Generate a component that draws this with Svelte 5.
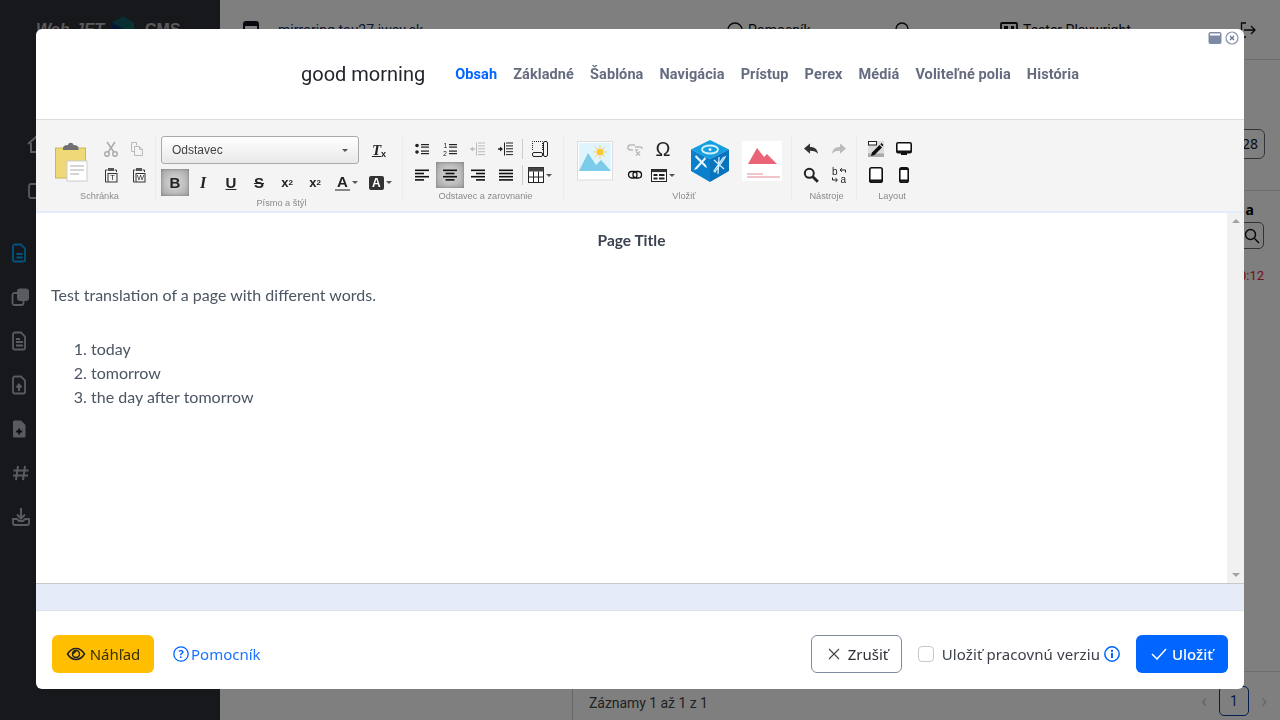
<script>
  const tabs = ['Obsah', 'Základné', 'Šablóna', 'Navigácia', 'Prístup', 'Perex', 'Médiá', 'Voliteľné polia', 'História'];

  // toolbar glyphs, all on a 16x16 box
  const lines = (rows, h = 1.6) => rows.map(([x, y, w]) => `<rect x="${x}" y="${y}" width="${w}" height="${h}"/>`).join('');
  const icons = {
    cut: '<g fill="none" stroke="#aaa" stroke-width="1.5"><circle cx="4" cy="13" r="2.2"/><circle cx="12" cy="13" r="2.2"/><path d="M5.2 11 12 1M10.8 11 4 1"/></g>',
    copy: '<g fill="none" stroke="#bbb" transform="translate(-2 0)"><path d="M2.5 1.5h5v3M2.500 1.500v9h3"/><path d="M5.500 5.500h5l3 3v6h-8z"/><path d="M10.500 5.500v3h3"/></g>',
    pasteT: '<g fill="none" stroke="#333"><path d="M4.500 3h-2v12h2M11.500 3h2v2"/><rect x="5" y="6.500" width="9" height="8.500"/></g><rect x="5" y="1" width="6" height="3" fill="#555"/><text x="9.500" y="13.400" font-size="7.500" text-anchor="middle" fill="#222" font-family="Liberation Sans">T</text>',
    pasteW: '<g fill="none" stroke="#333"><path d="M4.500 3h-2v12h2M11.500 3h2v2"/><rect x="5" y="6.500" width="9" height="8.500"/></g><rect x="5" y="1" width="6" height="3" fill="#555"/><text x="9.500" y="13.400" font-size="7.500" text-anchor="middle" fill="#222" font-family="Liberation Sans">W</text>',
    bullets: '<g fill="#222"><circle cx="3" cy="4.500" r="1.800"/><circle cx="3" cy="11" r="1.800"/>' + lines([[7, 3, 8], [7, 5.500, 8], [7, 9.500, 8], [7, 12, 8]], 1.2) + '</g>',
    numbers: '<g fill="#222"><text x="1.500" y="7" font-size="7" font-family="Liberation Sans">1</text><text x="1" y="14.500" font-size="7" font-family="Liberation Sans">2</text>' + lines([[7, 3, 8], [7, 5.500, 8], [7, 9.500, 8], [7, 12, 8]], 1.2) + '</g>',
    outdent: '<g fill="#bbb">' + lines([[8, 1.500, 7], [8, 4.400, 7], [8, 7.300, 7], [8, 10.200, 7], [8, 13.100, 7]], 1) + '<rect x="6" y="1.500" width="1" height="13"/><path d="M0 8l3-2.500v1.800h2v1.400H3v1.800z"/></g>',
    indent: '<g fill="#222">' + lines([[8, 1.500, 7], [8, 4.400, 7], [8, 7.300, 7], [8, 10.200, 7], [8, 13.100, 7]], 1) + '<rect x="6" y="1.500" width="1" height="13"/><path d="M5 8 2 5.500v1.800H0v1.400h2v1.800z"/></g>',
    blocks: '<g fill="none" stroke="#222"><path d="M.5 9V.5h10V9" stroke-dasharray="1 1"/><rect x="11.500" y=".5" width="4" height="15" rx="1.500"/><rect x=".5" y="11.500" width="10" height="4" rx="1.500"/></g>',
    left: '<g fill="#111">' + lines([[1, 2.500, 14], [1, 5.700, 9], [1, 8.900, 14], [1, 12.100, 9]]) + '</g>',
    center: '<g fill="#111">' + lines([[1, 2.500, 14], [3.500, 5.700, 9], [1, 8.900, 14], [3.500, 12.100, 9]]) + '</g>',
    right: '<g fill="#111">' + lines([[1, 2.500, 14], [6, 5.700, 9], [1, 8.900, 14], [6, 12.100, 9]]) + '</g>',
    justify: '<g fill="#111">' + lines([[1, 2.500, 14], [1, 5.700, 14], [1, 8.900, 14], [1, 12.100, 14]]) + '</g>',
    table: '<rect x=".5" y=".5" width="15" height="15" fill="#fff" stroke="#222"/><rect x=".5" y=".5" width="15" height="4" fill="#444"/><path d="M.5 10h15M5.500 4.500v11M10.500 4.500v11" stroke="#222" fill="none"/>',
    unlink: '<g fill="none" stroke="#bbb" stroke-width="1.500"><path d="M8 4H3.500a2.500 2.500 0 0 0 0 5H6M8 9h3"/><path d="M8 6h5a2 2 0 0 1 2 2"/><path d="m9 10.500 4 4m0-4-4 4"/></g>',
    link: '<g fill="none" stroke="#111" stroke-width="1.300"><rect x="1.500" y="4.500" width="8.500" height="6.500" rx="3.200"/><rect x="6" y="4.500" width="8.500" height="6.500" rx="3.200"/></g>',
    form: '<rect x=".5" y="2.500" width="15" height="12" fill="#fff" stroke="#222"/><rect x=".5" y="2.500" width="15" height="2.600" fill="#333"/><g fill="#222"><rect x="2.500" y="7" width="4" height="2"/><rect x="2.500" y="10.500" width="4" height="2"/><rect x="8" y="7" width="5.500" height="2"/><rect x="8" y="10.500" width="5.500" height="2"/></g>',
    undo: '<path d="M1 7.500 7 2.500V6c5 0 7.500 2.500 8 7-1.500-2.400-4-3.200-8-3.200v3z" fill="#333"/>',
    redo: '<path d="M15 7.500 9 2.500V6c-5 0-7.500 2.500-8 7 1.500-2.400 4-3.200 8-3.200v3z" fill="#bbb"/>',
    search: '<circle cx="6.300" cy="6.300" r="4.500" fill="none" stroke="#222" stroke-width="2"/><path d="m9.800 9.800 5 5" stroke="#222" stroke-width="2.800"/>',
    replace: '<text x="1" y="7.500" font-size="10" fill="#222" font-family="Liberation Sans">b</text><text x="9.500" y="16" font-size="10" fill="#222" font-family="Liberation Sans">a</text><path d="M14.500 5.500V3H9.500M11 1.200 9 3l2 1.800M1.500 10.500V13H6M4.500 11.200 6.500 13l-2 1.800" fill="none" stroke="#222"/>',
    edit: '<rect width="16" height="16" fill="#ddd"/><rect y="12.500" width="16" height="3.500" fill="#aaa"/><rect x=".5" y=".5" width="8" height="3.500" fill="#fff" stroke="#222"/><path d="M3 15l1-3.500L11.500 4 14 6.500 6.500 14z" fill="#111"/><path d="m12.300 3.200 1.200-1.200 2 2-1.200 1.200z" fill="#111"/>',
    desktop: '<rect x=".8" y="1.800" width="14.400" height="10" rx="1.300" fill="#fff" stroke="#111" stroke-width="1.600"/><rect x="1" y="9.500" width="14" height="2.500" fill="#111"/><rect x="5" y="12" width="6" height="2" fill="#111"/>',
    tablet: '<rect x="1.800" y=".8" width="12.400" height="14.400" rx="1.800" fill="#fff" stroke="#111" stroke-width="1.600"/><rect x="2" y="12.500" width="12" height="2.300" fill="#111"/>',
    phone: '<rect x="3.800" y=".8" width="8.400" height="14.400" rx="1.800" fill="#fff" stroke="#111" stroke-width="1.600"/><rect x="4" y="12.500" width="8" height="2.300" fill="#111"/><rect x="4" y="1" width="8" height="2" fill="#111"/>'
  };

  const sideIcons = [
    '<path d="M4 1.500h6l4 4V17a1.500 1.500 0 0 1-1.500 1.500h-9A1.500 1.500 0 0 1 2 17V3.500A2 2 0 0 1 4 1.500z" fill="none" stroke="currentColor" stroke-width="1.800"/><path d="M5.500 11h6M5.500 14.500h6" stroke="currentColor" stroke-width="1.800"/>',
    '<rect x="1.500" y="6" width="11" height="12" rx="2" fill="none" stroke="currentColor" stroke-width="1.800"/><rect x="6" y="1.500" width="12" height="12.500" rx="3" fill="currentColor"/>',
    '<path d="M4 1.500h6l4 4V17a1.500 1.500 0 0 1-1.500 1.500h-9A1.500 1.500 0 0 1 2 17V3.500A2 2 0 0 1 4 1.500z" fill="none" stroke="currentColor" stroke-width="1.800"/><path d="M5 8h4M5 11h7M5 14.500h7" stroke="currentColor" stroke-width="1.800"/>',
    '<path d="M4 1.500h6l4 4V17a1.500 1.500 0 0 1-1.500 1.500h-9A1.500 1.500 0 0 1 2 17V3.500A2 2 0 0 1 4 1.500z" fill="none" stroke="currentColor" stroke-width="1.800"/><path d="M8 16v-5M5.500 12.500 8 9.500l2.500 3" fill="none" stroke="currentColor" stroke-width="2"/>',
    '<path d="M3.500 1.500h6.500l4.500 4.500V17a1.500 1.500 0 0 1-1.500 1.500H3.500A1.500 1.500 0 0 1 2 17V3a1.500 1.500 0 0 1 1.500-1.500z" fill="currentColor"/><path d="M8.200 9.500v6M5.200 12.500h6" stroke="#17181c" stroke-width="1.800"/>',
    '<path d="M7 3 5 17M14 3l-2 14M2.500 7.500h15M2 12.500h15" stroke="currentColor" stroke-width="2" fill="none"/>',
    '<path d="M10 1v10M6 7.500l4 4 4-4" fill="none" stroke="currentColor" stroke-width="2"/><path d="M2 12v4a2 2 0 0 0 2 2h12a2 2 0 0 0 2-2v-4h-4l-2 2H8l-2-2z" fill="none" stroke="currentColor" stroke-width="1.800"/>'
  ];
</script>

{#snippet tb(name, extra = '')}
  <button type="button" class="tb {extra}" aria-label={name}>
    <svg width="16" height="16" viewBox="0 0 16 16" overflow="visible">{@html icons[name]}</svg>
  </button>
{/snippet}

<div class="page">
  <aside class="sidebar">
    <div class="logo">
      <span class="web">Web</span><span class="jet">JET</span>
      <svg width="24" height="28" viewBox="0 0 26 30"><path d="M13 0 25 7 13 14 1 7z" fill="#0f5f63"/><path d="M1 7v15l12 7V14z" fill="#0b2f6e"/><path d="M25 7v15l-12 7V14z" fill="#0c6a5e"/></svg>
      <span class="cms">CMS</span>
    </div>
    <nav class="side-nav">
      <div class="side-top">
        <svg width="20" height="20" viewBox="0 0 20 20"><path d="M1 10 10 2l9 8M4 9v9h12V9" fill="none" stroke="currentColor" stroke-width="2"/></svg>
        <svg width="20" height="20" viewBox="0 0 20 20"><rect x="2" y="3" width="16" height="14" rx="2" fill="none" stroke="currentColor" stroke-width="1.800"/></svg>
      </div>
      {#each sideIcons as ic, i}
        <svg class:active={i === 0} width="20" height="20" viewBox="0 0 20 20">{@html ic}</svg>
      {/each}
    </nav>
  </aside>

  <main class="main">
    <header class="topbar">
      <span class="domain"><svg width="16" height="18" viewBox="0 0 16 18"><rect x="1" y="1" width="14" height="16" rx="2" fill="none" stroke="#0b1020" stroke-width="2"/><rect x="1" y="1" width="14" height="4" fill="#0b1020"/></svg>
        <span>mirroring.tau27.iway.sk</span></span>
      <span class="top-help">
        <svg width="16" height="16" viewBox="0 0 16 16"><circle cx="8" cy="8" r="7" fill="none" stroke="#111" stroke-width="1.400"/></svg>
        Pomocník</span>
      <svg class="top-search" width="16" height="16" viewBox="0 0 16 16"><circle cx="7" cy="7" r="6" fill="none" stroke="#111" stroke-width="1.400"/></svg>
      <span class="top-user">
        <svg width="18" height="16" viewBox="0 0 18 16"><rect x="1" y="1" width="16" height="14" rx="1" fill="none" stroke="#111" stroke-width="1.800"/><rect x="4" y="4" width="4" height="4" fill="#111"/><rect x="11" y="4" width="3" height="4" fill="#111"/></svg>
        Tester Playwright ⌄</span>
      <svg width="16" height="18" viewBox="0 0 16 18"><path d="M6 2H1.500v14H6M4 9h11M11 5l4 4-4 4" fill="none" stroke="#111" stroke-width="1.300"/></svg>
    </header>
    <section class="behind">
      <div class="b-toolbar"><span class="b-box">28</span></div>
      <div class="b-table">
        <b class="b-head">a</b>
        <span class="b-search">
          <svg width="16" height="16" viewBox="0 0 16 16"><circle cx="6.500" cy="6.500" r="5" fill="none" stroke="#111" stroke-width="1.400"/><path d="m10.500 10.500 4.500 4.500" stroke="#111" stroke-width="1.400"/></svg>
        </span>
        <span class="b-time">0:12</span>
      </div>
    </section>
    <footer class="b-foot">
      <span class="b-count">Záznamy 1 až 1 z 1</span>
      <span class="pager"><span class="chev">‹</span><span class="page-no">1</span><span class="chev">›</span></span>
    </footer>
  </main>
</div>

<div class="backdrop"></div>

<div class="modal" role="dialog">
  <div class="win-ctl">
    <svg width="14" height="14" viewBox="0 0 14 14"><rect x=".5" y="1" width="13" height="12" rx="2" fill="#7d8aa5"/><rect x="2" y="2.500" width="10" height="2" fill="#fff"/></svg>
    <svg width="14" height="14" viewBox="0 0 14 14"><circle cx="7" cy="7" r="6" fill="#fff" stroke="#8894ac" stroke-width="1.200"/><path d="m5 5 4 4m0-4-4 4" stroke="#66728c" stroke-width="1.300"/></svg>
  </div>
  <div class="modal-head">
    <h2>good morning</h2>
    <ul class="tabs">
      {#each tabs as t, i}
        <li class:on={i === 0}>{t}</li>
      {/each}
    </ul>
  </div>

  <div class="toolbar">
    <div class="group g-clip">
      <div class="body">
        <svg class="paste" width="36" height="42" viewBox="0 0 36 42">
          <rect x=".5" y="8" width="30" height="30" fill="#efd976" stroke="#cbb560"/>
          <path d="M8 8c0-2 2-3 5-3 .5-3 5-3 5.500 0 3 0 5 1 5 3v2H8z" fill="#6f6f6f"/>
          <rect x="12" y="21" width="20" height="20" fill="#fff" stroke="#ccc"/>
          <path d="M15 26h14M15 30h14M15 34h9" stroke="#c8c8c8" stroke-width="1.500"/>
        </svg>
        <div class="rows">
          <div class="row">{@render tb('cut')}{@render tb('copy')}</div>
          <div class="row">{@render tb('pasteT')}{@render tb('pasteW')}</div>
        </div>
      </div>
      <span class="label">Schránka</span>
    </div>

    <div class="group g-font">
      <div class="body col">
        <div class="row top">
          <div class="select">Odstavec<i class="caret"></i></div>
          <button type="button" class="tb clear" aria-label="clear"><span class="tx">T</span><span class="xs">x</span></button>
        </div>
        <div class="row styles">
          <button type="button" class="tb ch on">B</button>
          <button type="button" class="tb ch ital">I</button>
          <button type="button" class="tb ch und">U</button>
          <button type="button" class="tb ch str">S</button>
          <button type="button" class="tb ch small">x<sub>2</sub></button>
          <button type="button" class="tb ch small">x<sup>2</sup></button>
          <button type="button" class="tb ch wide"><span class="fcol">A</span><i class="caret"></i></button>
          <button type="button" class="tb ch wide"><span class="bcol">A</span><i class="caret"></i></button>
        </div>
      </div>
      <span class="label">Písmo a štýl</span>
    </div>

    <div class="group g-para">
      <div class="body col">
        <div class="row">{@render tb('bullets')}{@render tb('numbers')}{@render tb('outdent')}{@render tb('indent')}<i class="vsep"></i>{@render tb('blocks')}</div>
        <div class="row">{@render tb('left')}{@render tb('center', 'on')}{@render tb('right')}{@render tb('justify')}<i class="vsep"></i>
          <button type="button" class="tb wide" aria-label="table"><svg width="16" height="16" viewBox="0 0 16 16">{@html icons.table}</svg><i class="caret"></i></button></div>
      </div>
      <span class="label">Odstavec a zarovnanie</span>
    </div>

    <div class="group g-insert">
      <div class="body">
        <svg class="pic" width="36" height="40" viewBox="0 0 36 40">
          <rect x=".5" y=".5" width="35" height="38.500" fill="#fff" stroke="#ddd"/>
          <rect x="2" y="2" width="32" height="28" fill="#dff4fc"/>
          <path d="M2 30 11 12l8 12 5-5 10 11z" fill="#7ccbea"/>
          <circle cx="23" cy="11" r="3.500" fill="#fdc72e"/>
          <path d="M23 4.500v2M23 15.500v2M16.500 11h2M27.500 11h2M18.500 6.500l1.500 1.500M26 14l1.500 1.500M27.500 6.500 26 8M20 14l-1.500 1.500" stroke="#fdc72e"/>
        </svg>
        <div class="rows">
          <div class="row">{@render tb('unlink')}<button type="button" class="tb omega">Ω</button></div>
          <div class="row">{@render tb('link')}<button type="button" class="tb wide" aria-label="form"><svg width="16" height="16" viewBox="0 0 16 16">{@html icons.form}</svg><i class="caret"></i></button></div>
        </div>
        <svg class="cube-big" width="40" height="42" viewBox="0 0 40 42">
          <path d="M20 0 39 9.500 20 19 1 9.500z" fill="#159fe0"/>
          <path d="M1 9.500V31l19 11V19z" fill="#0a7fcc"/>
          <path d="M39 9.500V31L20 42V19z" fill="#0a73bd"/>
          <ellipse cx="20" cy="9.500" rx="8" ry="4" fill="none" stroke="#d3f0fb" stroke-width="1.800"/>
          <circle cx="20" cy="9.500" r="1.500" fill="#d3f0fb"/>
          <path d="m5 17 10 10 2 1-1-3L6 15zM15 17 5 28l-1 2 3-1 9-10z" fill="#e9f7fd"/>
          <path d="m25 32 9-13 1-2-2 1-9 13zM24 20l10 9M29 17l-1 17" fill="none" stroke="#cdeefa" stroke-width="1.300"/>
        </svg>
        <svg class="pink" width="40" height="40" viewBox="0 0 40 40">
          <rect width="40" height="40" fill="#fff"/>
          <path d="M6 23 15 7l7 9 3-3 10 10z" fill="#ea6377"/>
          <path d="M5 33h16M5 36h33" stroke="#ea8a98" stroke-width="1.200"/>
        </svg>
      </div>
      <span class="label">Vložiť</span>
    </div>

    <div class="group g-tools">
      <div class="body col">
        <div class="row">{@render tb('undo')}{@render tb('redo')}</div>
        <div class="row">{@render tb('search')}{@render tb('replace')}</div>
      </div>
      <span class="label">Nástroje</span>
    </div>

    <div class="group g-layout">
      <div class="body col">
        <div class="row">{@render tb('edit')}{@render tb('desktop')}</div>
        <div class="row">{@render tb('tablet')}{@render tb('phone')}</div>
      </div>
      <span class="label">Layout</span>
    </div>
  </div>

  <div class="editor">
    <div class="content">
      <h3>Page Title</h3>
      <p>Test translation of a page with different words.</p>
      <ol>
        <li>today</li>
        <li>tomorrow</li>
        <li>the day after tomorrow</li>
      </ol>
    </div>
    <div class="scroll"><i class="up"></i><i class="down"></i></div>
  </div>
  <div class="status"></div>

  <div class="modal-foot">
    <button type="button" class="btn preview">
      <svg width="20" height="20" viewBox="0 0 20 20"><path d="M1.500 10C4 6 7 4.500 10 4.500s6 1.500 8.500 5.500c-2.500 4-5.500 5.500-8.500 5.500S4 14 1.500 10z" fill="none" stroke="#222" stroke-width="1.500"/><circle cx="10" cy="10" r="3.500" fill="none" stroke="#222" stroke-width="1.500"/><path d="M7.500 10A2.500 2.500 0 0 1 10 7.500" stroke="#222" stroke-width="1.500" fill="none"/></svg>
      Náhľad
    </button>
    <span class="help">
      <svg width="16" height="16" viewBox="0 0 16 16"><circle cx="8" cy="8" r="7.200" fill="none" stroke="#0066ff" stroke-width="1.300"/><text x="8" y="11.800" font-size="11" font-weight="700" text-anchor="middle" fill="#0066ff" font-family="Noto Sans">?</text></svg>Pomocník
    </span>
    <span class="spacer"></span>
    <button type="button" class="btn cancel">
      <svg width="12" height="12" viewBox="0 0 12 12"><path d="m1 1 10 10M11 1 1 11" stroke="#444" stroke-width="1.100"/></svg>
      Zrušiť
    </button>
    <label class="draft">
      <i class="check"></i>Uložiť pracovnú verziu
      <svg width="16" height="16" viewBox="0 0 16 16"><circle cx="8" cy="8" r="7.200" fill="none" stroke="#0066ff" stroke-width="1.500"/><rect x="7" y="6.800" width="2" height="5.200" fill="#0066ff"/><rect x="7" y="3.800" width="2" height="2" fill="#0066ff"/></svg>
    </label>
    <button type="button" class="btn save">
      <svg width="16" height="12" viewBox="0 0 16 12"><path d="m1 6 5 5L15 1" fill="none" stroke="#fff" stroke-width="1.500"/></svg>
      Uložiť
    </button>
  </div>
</div>

<style>
  :global(body) {
    margin: 0;
    font-family: "Noto Sans", sans-serif;
    overflow: hidden;
  }

  .page {
    display: flex;
    height: 720px;
    background: #fff;
  }

  .sidebar {
    width: 220px;
    background: #2e3038;
    color: #b4b7bd;
    flex: none;
  }

  .logo {
    display: flex;
    align-items: center;
    height: 60px;
    padding-left: 36px;
    color: #b4b4b4;
    font: 700 16px "Liberation Sans", sans-serif;
  }

  .web {
    font-style: italic;
    width: 39px;
  }

  .jet {
    width: 36px;
    font-style: italic;
  }

  .cms {
    margin-left: 10px;
  }

  .side-nav {
    display: flex;
    flex-direction: column;
    gap: 24px;
    padding: 76px 0 0 11px;
  }

  .side-top {
    display: flex;
    flex-direction: column;
    gap: 27px;
    margin: -2px 0 18px 16px;
  }

  .side-nav .active {
    color: #00a8ff;
  }

  .main {
    flex: 1;
    display: flex;
    flex-direction: column;
    min-width: 0;
  }

  .topbar {
    display: flex;
    align-items: center;
    height: 59px;
    border-bottom: 1px solid #ddd;
    padding-left: 23px;
    font: 14px Roboto, sans-serif;
    color: #111;
    box-sizing: content-box;
  }

  .domain {
    display: flex;
    gap: 19px;
    align-items: center;
    width: 484px;
    color: #13306a;
  }

  .top-help {
    display: flex;
    gap: 5px;
    align-items: center;
    width: 168px;
  }

  .top-search {
    margin-right: 89px;
  }

  .top-user {
    display: flex;
    gap: 5px;
    align-items: center;
    width: 240px;
  }

  .behind {
    flex: 1;
    display: flex;
    flex-direction: column;
    align-items: flex-end;
  }

  .b-toolbar {
    align-self: stretch;
    height: 131px;
    display: flex;
    justify-content: flex-end;
    padding: 69px 15px 0 0;
    box-sizing: border-box;
    border-bottom: 1px solid #ddd;
  }

  .b-box {
    height: 30px;
    width: 40px;
    border: 1px solid #667;
    border-radius: 6px;
    box-sizing: border-box;
    line-height: 28px;
    text-align: right;
    padding-right: 6px;
    font-size: 14px;
    color: #123;
  }

  .b-table {
    display: flex;
    flex-direction: column;
    align-items: flex-end;
    padding: 9px 16px 0 0;
  }

  .b-head {
    font-size: 14px;
    line-height: 20px;
    padding-right: 10px;
  }

  .b-search {
    display: flex;
    align-items: center;
    justify-content: flex-end;
    width: 40px;
    height: 27px;
    margin: 2px 0 17px;
    padding-right: 3px;
    box-sizing: border-box;
    border: 1px solid #667;
    border-radius: 5px;
  }

  .b-time {
    font: 13px/20px Roboto, sans-serif;
    color: #e02030;
  }

  .b-foot {
    height: 49px;
    display: flex;
    align-items: center;
    justify-content: space-between;
    box-sizing: border-box;
    border-top: 1px solid #ddd;
    padding: 0 13px 0 352px;
    font: 14px Roboto, sans-serif;
    color: #444;
  }

  .b-count {
    align-self: flex-end;
    height: 31px;
    line-height: 29px;
    border-left: 1px solid #ccc;
    padding-left: 16px;
    letter-spacing: -0.05px;
  }

  .pager {
    display: flex;
    align-items: center;
    gap: 12px;
    padding-top: 9px;
    color: #ccc;
  }

  .page-no {
    width: 30px;
    height: 30px;
    border: 1px solid #0d3c96;
    border-radius: 5px;
    box-sizing: border-box;
    text-align: center;
    line-height: 28px;
    color: #0d3c96;
  }

  .chev {
    font-size: 20px;
    line-height: 1;
  }

  .backdrop {
    position: fixed;
    inset: 0;
    background: rgba(0, 0, 0, 0.5);
  }

  .modal {
    position: fixed;
    left: 36px;
    top: 29px;
    width: 1208px;
    height: 660px;
    background: #fff;
    border-radius: 6px;
    display: flex;
    flex-direction: column;
    overflow: hidden;
  }

  .win-ctl {
    position: absolute;
    top: 2px;
    right: 5px;
    display: flex;
    gap: 3px;
  }

  .modal-head {
    height: 91px;
    display: flex;
    align-items: center;
    padding: 0 0 0 265px;
    gap: 30px;
    box-sizing: border-box;
    border-bottom: 1px solid #ddd;
    flex: none;
  }

  h2 {
    margin: 0;
    font: 400 20px Roboto, sans-serif;
    color: #22262d;
  }

  .tabs {
    display: flex;
    gap: 16px;
    list-style: none;
    margin: 0;
    padding: 0;
    font: 700 14.500px Roboto, sans-serif;
    letter-spacing: 0.1px;
    color: #666c80;
  }

  .tabs .on {
    color: #0066ff;
  }

  .toolbar {
    height: 93px;
    flex: none;
    display: flex;
    box-sizing: border-box;
    padding-top: 16px;
    background: #f4f4f4;
    border-bottom: 2px solid #e3edf9;
  }

  .group {
    display: flex;
    flex-direction: column;
    height: 65px;
    border-right: 1px solid #ececec;
    box-sizing: border-box;
  }

  .label {
    margin-top: auto;
    text-align: center;
    font: 9.200px/12px "Liberation Sans", sans-serif;
    color: #8a8a8a;
    white-space: nowrap;
    transform: translateY(1px);
  }

  .g-clip { width: 120px; padding-left: 8px; }
  .g-font { width: 247px; padding-left: 5px; }
  .g-para { width: 161px; padding-left: 5px; }
  .g-insert { width: 228px; padding-left: 13px; }
  .g-tools { width: 65px; padding-left: 5px; }
  .g-layout { width: 65px; padding-left: 5px; border-right: 0; }

  .body {
    display: flex;
  }

  .body.col {
    flex-direction: column;
  }

  .rows {
    display: flex;
    flex-direction: column;
  }

  .row {
    display: flex;
    align-items: center;
    height: 26px;
  }

  .paste {
    margin: 4px 6px 0 11px;
  }

  .tb {
    width: 28px;
    height: 26px;
    padding: 0;
    border: 0;
    background: none;
    display: flex;
    align-items: center;
    justify-content: center;
    color: #222;
    flex: none;
  }

  .tb.on {
    background: radial-gradient(#c8c8c8 35%, #a0a0a0 100%);
    box-shadow: inset 0 0 3px #777;
  }

  .tb.wide {
    gap: 2px;
  }

  .vsep {
    width: 1px;
    height: 20px;
    background: #ccc;
    margin: 0 3px 0 2px;
  }

  .caret {
    width: 0;
    height: 0;
    border: 3px solid transparent;
    border-top: 3px solid #555;
    border-bottom: 0;
    flex: none;
  }

  .row.top {
    height: 28px;
  }

  .select {
    width: 198px;
    height: 28px;
    box-sizing: border-box;
    border: 1px solid #aaa;
    border-radius: 3px;
    background: linear-gradient(#fff, #e8e8e8);
    font: 12px/26px "Liberation Sans", sans-serif;
    color: #444;
    padding: 0 10px;
    display: flex;
    align-items: center;
    justify-content: space-between;
  }

  .clear {
    margin-left: 6px;
    font: italic 700 15px "Liberation Serif", serif;
  }

  .tx {
    text-decoration: underline;
  }

  .xs {
    font: 700 9px "Liberation Sans", sans-serif;
    margin-top: 8px;
  }

  .row.styles {
    height: 27px;
    margin-top: 5px;
  }

  .ch {
    height: 27px;
    font: 700 15px "Liberation Sans", sans-serif;
    color: #222;
  }

  .ital {
    font: italic 700 16px "Liberation Serif", serif;
  }

  .und {
    text-decoration: underline;
  }

  .str {
    text-decoration: line-through;
  }

  .ch.small {
    font-size: 13px;
  }

  .small sub,
  .small sup {
    font-size: 8px;
    line-height: 0;
  }

  .ch.wide {
    width: 34px;
    justify-content: flex-start;
    padding-left: 6px;
    box-sizing: border-box;
  }

  .fcol {
    border-bottom: 2px solid #888;
    line-height: 15px;
    padding: 0 2px;
  }

  .bcol {
    background: #333;
    color: #fff;
    border-radius: 2px;
    line-height: 14px;
    padding: 0 3px;
    font-size: 12px;
  }

  .pic {
    margin: 5px 8px 0 0;
  }

  .omega {
    font: 400 20px "Liberation Sans", sans-serif;
    color: #222;
  }

  .cube-big {
    margin: 4px 0 0 13px;
  }

  .pink {
    margin: 5px 0 0 12px;
  }

  .editor {
    flex: 1;
    display: flex;
    min-height: 0;
  }

  .content {
    flex: 1;
    padding: 17px 15px 0;
    font: 400 16px/24px Lato, sans-serif;
    color: #4b5563;
  }

  h3 {
    margin: 0 0 33px;
    text-align: center;
    font: 700 15.500px/20px Lato, sans-serif;
    color: #3a4250;
  }

  .content p {
    margin: 0 0 30px;
  }

  ol {
    margin: 0;
    padding-left: 40px;
  }

  .scroll {
    width: 17px;
    background: #f1f1f1;
    display: flex;
    flex-direction: column;
    justify-content: space-between;
    align-items: center;
    padding: 6px 0;
    box-sizing: border-box;
  }

  .up,
  .down {
    width: 0;
    height: 0;
    border: 4px solid transparent;
  }

  .up {
    border-bottom: 4px solid #a3a3a3;
    border-top: 0;
  }

  .down {
    border-top: 4px solid #a3a3a3;
    border-bottom: 0;
  }

  .status {
    flex: none;
    height: 28px;
    background: #e5ecf7;
    border-top: 1px solid #c8c8c8;
    border-bottom: 1px solid #dfe3ea;
    box-sizing: border-box;
  }

  .modal-foot {
    flex: none;
    height: 78px;
    display: flex;
    align-items: center;
    padding: 8px 16px 0;
    box-sizing: border-box;
  }

  .btn {
    height: 38px;
    display: flex;
    align-items: center;
    gap: 4px;
    border: 0;
    border-radius: 6px;
    font: 400 15px "Noto Sans", sans-serif;
    box-sizing: border-box;
  }

  .preview {
    width: 102px;
    justify-content: center;
    background: #ffbe00;
    color: #3a3000;
  }

  .help {
    display: flex;
    align-items: center;
    margin-left: 19px;
    gap: 2px;
    color: #1a74ff;
    font-size: 15px;
  }

  .spacer {
    flex: 1;
  }

  .cancel {
    width: 91px;
    gap: 8px;
    padding-left: 16px;
    justify-content: flex-start;
    background: #fff;
    border: 1px solid #8088a0;
    color: #2c2f36;
  }

  .draft {
    display: flex;
    align-items: center;
    margin: 0 16px;
    font-size: 15px;
    letter-spacing: 0.1px;
    color: #3c4048;
    gap: 4px;
  }

  .check {
    width: 16px;
    height: 16px;
    border: 1px solid #c2c7d0;
    border-radius: 4px;
    margin-right: 4px;
    box-sizing: border-box;
  }

  .save {
    width: 92px;
    justify-content: center;
    gap: 5px;
    background: #0066ff;
    color: #fff;
    font-weight: 500;
  }
</style>
